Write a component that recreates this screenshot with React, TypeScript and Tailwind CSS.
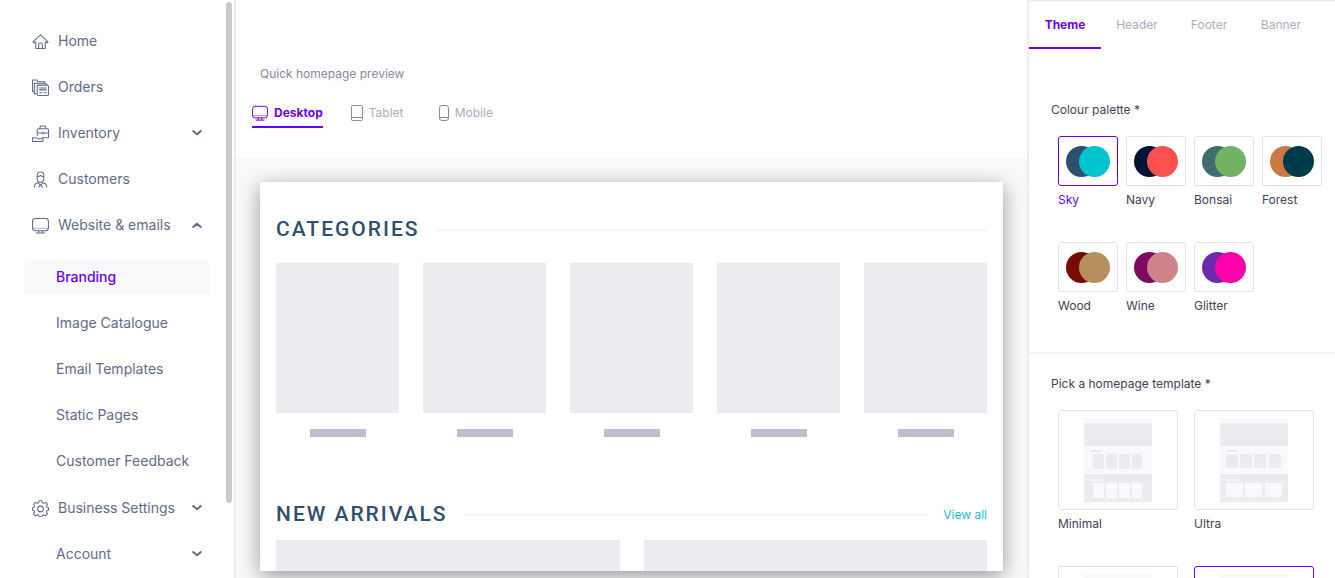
import { type ReactNode, useState } from 'react'

const palettes = [
  { name: 'Sky', back: '#2f4f6f', front: '#00c4cf' },
  { name: 'Navy', back: '#001435', front: '#ff5050' },
  { name: 'Bonsai', back: '#406d70', front: '#71b362' },
  { name: 'Forest', back: '#c97a43', front: '#003b49' },
  { name: 'Wood', back: '#780c00', front: '#b5905c' },
  { name: 'Wine', back: '#7d0a62', front: '#d0828c' },
  { name: 'Glitter', back: '#6c2aae', front: '#ff00aa' },
]

const templates = [
  { id: 'minimal', label: 'Minimal' },
  { id: 'ultra', label: 'Ultra' },
  { id: 'third' },
  { id: 'fourth' },
]

function Icon({ children, className }: { children: ReactNode; className?: string }) {
  return (
    <svg
      viewBox="0 0 18 18"
      className={className ?? 'size-[17px] shrink-0'}
      fill="none"
      stroke="currentColor"
      strokeWidth="1.1"
      strokeLinejoin="round"
      strokeLinecap="round"
      aria-hidden="true"
    >
      {children}
    </svg>
  )
}

function HomeIcon() {
  return (
    <Icon>
      <path d="M1 9.5 9 2l8 7.500-1 1-2-1V16.500H4V9.500l-2 1z" />
      <path d="M7 16.500v-4a2 2 0 0 1 4 0v4" />
    </Icon>
  )
}

function OrdersIcon() {
  return (
    <Icon>
      <path d="M2.500 13.500H.600v-12.500h4.500l1 2h7.500v1" />
      <path d="M4.500 15.500h-2V4.500h12l1 2" />
      <path d="M5.500 6.500h11l1 1v9l-1 1h-10l-1-1z" />
      <path d="M8 9.500h7M8 11.500h7M8 14.500h2.500M13 14.500h2" />
    </Icon>
  )
}

function InventoryIcon() {
  return (
    <Icon>
      <path d="M5.500 11V5l1-1h10l1 1v8.500h-7M5.500 8.500h12M8.500 4V2l1-1h4l1 1v2M11.500 7.500v2" />
      <path d="M.600 13.500h4l1 1h6v3H.600z" />
    </Icon>
  )
}

function CustomersIcon() {
  return (
    <Icon>
      <path d="M5.500 6.500V5C5.500 2.500 7 1 9 1s3.500 1.500 3.500 4v3.500a3.500 3.500 0 0 1-7 0zM5.500 6c2 0 3-.5 3.500-1.500.5 1 1.500 1.500 3.500 1.500" />
      <path d="M2.500 17c0-2.500 1.500-4 4-4.500L9 15l2.500-2.500c2.500.5 4 2 4 4.500M9 15l-2 2M9 15l2 2" />
    </Icon>
  )
}

function MonitorIcon({ className }: { className?: string }) {
  return (
    <Icon className={className}>
      <rect x=".6" y="1.500" width="16.800" height="13" rx="3" />
      <path d="M1 12h16" strokeOpacity=".5" />
      <path d="M7 14.500v2.500M11 14.500v2.500M4.500 17h9" />
    </Icon>
  )
}

function GearIcon() {
  return (
    <Icon>
      <path d="M7.500.800h3l.5 2.200 1.300.6 2-1.200 2.100 2.100-1.200 2 .6 1.300 1.700.5v2.600l-1.700.5-.6 1.300 1.200 2-2.100 2.100-2-1.200-1.300.6-.5 1.600h-3L7 16.200l-1.300-.6-2 1.200-2.100-2.100 1.200-2-.6-1.300L.6 10.900V8.300l1.600-.5.6-1.300-1.200-2 2.100-2.100 2 1.200L7 3z" />
      <circle cx="9" cy="9.500" r="3" />
    </Icon>
  )
}

function Chevron({ up }: { up?: boolean }) {
  return (
    <svg viewBox="0 0 10 6" className="ml-auto h-1.5 w-2.5" fill="none" stroke="currentColor" strokeWidth="2" aria-hidden="true">
      <path d={up ? 'M1.200 4.900 5 1.700l3.800 3.200' : 'M1.200 1.100 5 4.300l3.800-3.200'} strokeLinecap="round" strokeLinejoin="round" />
    </svg>
  )
}

function NavItem({ icon, label, open }: { icon?: ReactNode; label: string; open?: boolean }) {
  const pad = icon ? 'pl-2' : 'pl-8'
  if (open === undefined) {
    return (
      <a href="#" className={`flex h-[34px] items-center gap-[9px] ${pad}`}>
        {icon}
        {label}
      </a>
    )
  }
  return (
    <button type="button" aria-expanded={open} className={`flex h-[34px] w-full items-center gap-[9px] pr-2 ${pad}`}>
      {icon}
      {label}
      <Chevron up={open} />
    </button>
  )
}

function Sidebar() {
  return (
    <aside className="flex w-[236px] shrink-0 border-r-2 border-[#ebecf0]">
      <nav className="flex flex-1 flex-col gap-3 pt-6 pr-4 pl-6 text-sm whitespace-nowrap text-[#5f6b89]">
        <NavItem icon={<HomeIcon />} label="Home" />
        <NavItem icon={<OrdersIcon />} label="Orders" />
        <NavItem icon={<InventoryIcon />} label="Inventory" open={false} />
        <NavItem icon={<CustomersIcon />} label="Customers" />
        <NavItem icon={<MonitorIcon />} label="Website & emails" open />
        <div className="mt-1.5 mb-px flex flex-col gap-3">
          <a href="#" aria-current="page" className="flex h-[34px] items-center rounded-t bg-[#f8f9fb] pl-8 font-medium text-[#6a00f0]">
            Branding
          </a>
          <NavItem label="Image Catalogue" />
          <NavItem label="Email Templates" />
          <NavItem label="Static Pages" />
          <NavItem label="Customer Feedback" />
        </div>
        <NavItem icon={<GearIcon />} label="Business Settings" open={false} />
        <NavItem label="Account" open={false} />
      </nav>
      <div className="mt-0.5 mr-0.5 h-[501px] w-1.5 rounded-full bg-[#cacaca]" />
    </aside>
  )
}

function DeviceTabs() {
  const [device, setDevice] = useState('Desktop')
  const devices = [
    { name: 'Desktop', icon: <MonitorIcon className="size-4" /> },
    {
      name: 'Tablet',
      icon: (
        <svg viewBox="0 0 12 16" className="h-4 w-3" fill="none" stroke="#858ba0" aria-hidden="true">
          <rect x=".5" y=".5" width="11" height="15" rx="1" />
          <path d="M.5 12.500h11" />
        </svg>
      ),
    },
    {
      name: 'Mobile',
      icon: (
        <svg viewBox="0 0 10 16" className="h-4 w-2.5" fill="none" stroke="#858ba0" aria-hidden="true">
          <rect x=".5" y=".5" width="9" height="15" rx="2.500" />
          <path d="M.5 12.500h9" />
        </svg>
      ),
    },
  ]
  return (
    <div className="mt-[22px] flex gap-7 pl-4 text-xs">
      {devices.map((d) => (
        <button
          key={d.name}
          type="button"
          onClick={() => setDevice(d.name)}
          className={
            d.name === device
              ? 'flex h-6 items-center gap-1.5 border-b-2 border-[#6a00f0] pb-1 font-bold text-[#6a00f0]'
              : 'flex h-6 min-w-[60px] items-center gap-1.5 border-b-2 border-transparent pb-1 text-[#a9adbd]'
          }
        >
          {d.icon}
          {d.name}
        </button>
      ))}
    </div>
  )
}

function SectionTitle({ title, link }: { title: string; link?: string }) {
  return (
    <div className="flex h-7 items-center gap-4">
      <h2 className="font-['Roboto',sans-serif] text-[21px] font-medium tracking-[2px] text-[#2f4f6f]">{title}</h2>
      <div className="h-0.5 flex-1 bg-[#f5f5f7]" />
      {link && (
        <a href="#" className="text-xs text-[#1fb6c9]">
          {link}
        </a>
      )}
    </div>
  )
}

function Preview() {
  return (
    <div className="flex-1 overflow-hidden bg-[#f8f9fb] px-6 pt-6 pb-[7px]">
      <div className="h-full bg-white shadow-[0_5px_20px_rgba(0,0,0,0.4)]">
        <div className="flex h-full flex-col overflow-hidden px-4 pt-[34px]">
          <SectionTitle title="CATEGORIES" />
          <div className="mt-[19px] grid grid-cols-5 gap-6">
            {[0, 1, 2, 3, 4].map((i) => (
              <div key={i} className="flex flex-col items-center gap-4">
                <div className="h-[150px] w-full bg-[#ebecf0]" />
                <div className="h-2 w-14 bg-[#bdbfce]" />
              </div>
            ))}
          </div>
          <div className="mt-16">
            <SectionTitle title="NEW ARRIVALS" link="View all" />
          </div>
          <div className="mt-[11px] grid flex-1 grid-cols-2 gap-6">
            <div className="bg-[#ebecf0]" />
            <div className="bg-[#ebecf0]" />
          </div>
        </div>
      </div>
    </div>
  )
}

function TemplateThumb({ wide }: { wide: boolean }) {
  const top = wide ? [6, 20, 34, 49] : [9, 22, 35, 48]
  const bottom = wide ? [6, 25, 45] : [9, 22, 35, 48]
  return (
    <svg viewBox="0 0 68 85" className="h-[85px] w-[68px]" shapeRendering="crispEdges" aria-hidden="true">
      <path fill="#f8f9fb" d="M0 0h68v85H0z" />
      <path fill="#ebecf0" d="M0 5h68v23H0zM0 56h68v28H0zM6 32h12v2H6z" />
      <path fill="#f8f9fb" d="M6 61h12v2H6z" />
      {top.map((x, i) => (
        <rect key={x} x={x} y="36" width={wide ? 12 : i === 3 ? 10 : 11} height={wide ? 14 : 15} fill="#ebecf0" />
      ))}
      {bottom.map((x, i) => (
        <rect key={x} x={x} y="65" width={wide ? 17 : i === 3 ? 10 : 11} height={wide ? 14 : 15} fill="#f8f9fb" />
      ))}
    </svg>
  )
}

function ThemePanel() {
  const [palette, setPalette] = useState('Sky')
  const [template, setTemplate] = useState('fourth')
  return (
    <aside className="w-[308px] shrink-0 overflow-hidden border-t border-l-2 border-[#ebecf0] text-xs text-[#3f4254]">
      <div className="flex">
        {['Theme', 'Header', 'Footer', 'Banner'].map((tab) => (
          <button
            key={tab}
            type="button"
            className={
              tab === 'Theme'
                ? 'h-12 w-[72px] border-b-2 border-[#6a00f0] pt-0.5 font-bold text-[#6a00f0]'
                : 'h-12 w-[72px] border-b-2 border-transparent pt-0.5 text-[#a9adbd]'
            }
          >
            {tab}
          </button>
        ))}
      </div>

      <section className="border-b-2 border-[#f4f4f6] pt-[53px] pb-[38px] pl-[22px]">
        <h3 className="leading-4">Colour palette *</h3>
        <div className="mt-[18px] grid grid-cols-[repeat(4,60px)] gap-x-2 gap-y-[34px] pl-[7px]">
          {palettes.map((p) => (
            <button key={p.name} type="button" onClick={() => setPalette(p.name)} className="flex flex-col gap-1.5 text-left">
              <span
                className={
                  p.name === palette
                    ? 'flex h-[50px] w-full items-center justify-center rounded-[3px] border border-[#6a00f0]'
                    : 'flex h-[50px] w-full items-center justify-center rounded-[3px] border border-[#e0e1e9]'
                }
              >
                <svg viewBox="0 0 44 32" className="h-8 w-11" aria-hidden="true">
                  <circle cx="15.500" cy="16.500" r="15.500" fill={p.back} />
                  <circle cx="28.500" cy="16.500" r="15.500" fill={p.front} />
                </svg>
              </span>
              <span className={p.name === palette ? 'leading-4 text-[#6a00f0]' : 'leading-4'}>{p.name}</span>
            </button>
          ))}
        </div>
      </section>

      <section className="pt-[22px] pl-[22px]">
        <h3 className="leading-4">Pick a homepage template *</h3>
        <div className="mt-[18px] grid grid-cols-[repeat(2,120px)] gap-x-4 gap-y-[34px] pl-[7px]">
          {templates.map((t, i) => (
            <button key={t.id} type="button" onClick={() => setTemplate(t.id)} className="flex flex-col gap-1.5 text-left">
              <span
                className={
                  t.id === template
                    ? 'flex h-[100px] w-full items-center justify-center rounded-[3px] border border-[#6a00f0]'
                    : 'flex h-[100px] w-full items-center justify-center rounded-[3px] border border-[#e0e1e9]'
                }
              >
                <TemplateThumb wide={i % 2 === 1} />
              </span>
              {t.label && <span className="leading-4">{t.label}</span>}
            </button>
          ))}
        </div>
      </section>
    </aside>
  )
}

export default function App() {
  return (
    <div className="flex h-screen overflow-hidden bg-white font-['Inter',sans-serif]">
      <Sidebar />
      <main className="flex min-w-0 flex-1 flex-col">
        <header className="h-[158px] pt-[66px]">
          <p className="pl-6 text-xs text-[#858ba0]">Quick homepage preview</p>
          <DeviceTabs />
        </header>
        <Preview />
      </main>
      <ThemePanel />
    </div>
  )
}
